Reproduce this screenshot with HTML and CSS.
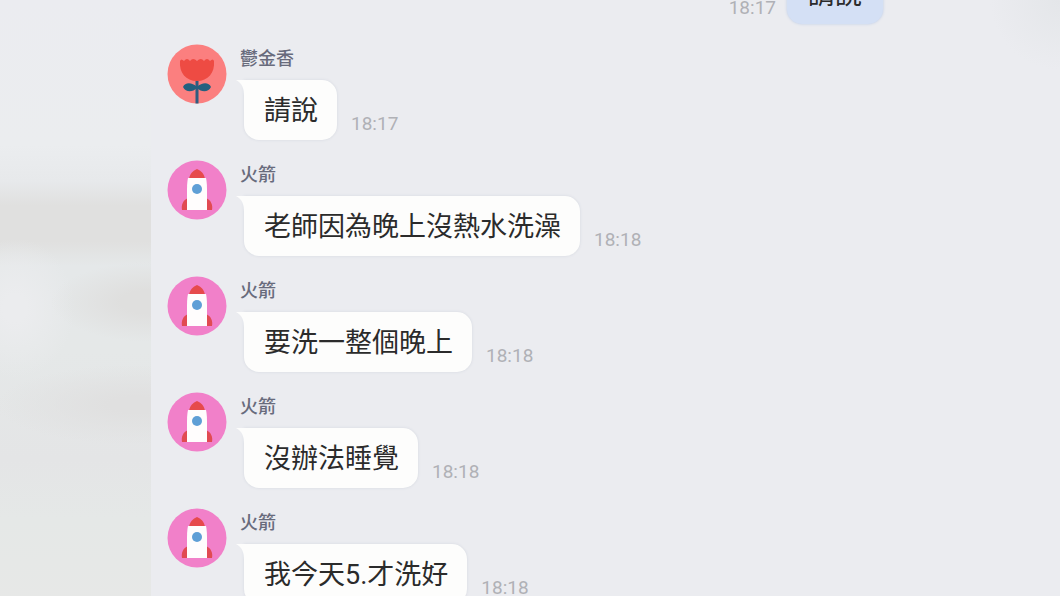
FILE: index.html
```
<!DOCTYPE html>
<html lang="zh-Hant">
  <head>
    <meta charset="UTF-8" />
    <meta name="viewport" content="width=device-width, initial-scale=1.0" />
    <title>聊天室</title>
    <link rel="stylesheet" href="styles.css">
  </head>
  <body>
    <!-- shared avatar drawings -->
    <svg class="defs" aria-hidden="true">
      <symbol id="tulip" viewBox="0 0 60 60">
        <circle cx="30" cy="30" r="29.500" fill="#fb7f7f" />
        <path d="M13 17 Q14 14 17 17 Q20 13 23 17 Q26 13 30 17 Q34 13 37 17 Q40 13 43 17 Q46 14 47 17 C48 29 41 37 30 37 C19 37 12 29 13 17Z" fill="#ee4b43" />
        <path d="M28.500 37 h3 v22.500 h-3z" fill="#2f5d80" />
        <path d="M30 43 C25 38 18 38 16 43 C19 49 26 48 30 44 C34 48 41 49 44 43 C42 38 35 38 30 43Z" fill="#23607f" />
      </symbol>
      <symbol id="rocket" viewBox="0 0 60 60">
        <circle cx="30" cy="30" r="29.500" fill="#f180c9" />
        <path d="M21 38 C16 40 14 45 15 50 H21Z M39 38 C44 40 46 45 45 50 H39Z" fill="#e14a52" />
        <path d="M22 19 C23 13 26 11 30 9 C34 11 37 13 38 19Z" fill="#e64a4c" />
        <path d="M21 18 H39 C40 23 40 27 40 34 V50 H20 V34 C20 27 20 23 21 18Z" fill="#fffdfd" />
        <circle cx="30" cy="29" r="5" fill="#5f9fd6" />
      </symbol>
    </svg>

    <div class="page">
      <div class="side side-left"></div>

      <main class="chat">
        <div class="message own">
          <time class="time">18:17</time>
          <p class="bubble">請說</p>
        </div>

        <div class="message">
          <svg class="avatar" role="img" aria-label="鬱金香"><use href="#tulip" /></svg>
          <div class="content">
            <h2 class="name">鬱金香</h2>
            <div class="line">
              <p class="bubble">請說</p>
              <time class="time">18:17</time>
            </div>
          </div>
        </div>

        <div class="message">
          <svg class="avatar" role="img" aria-label="火箭"><use href="#rocket" /></svg>
          <div class="content">
            <h2 class="name">火箭</h2>
            <div class="line">
              <p class="bubble">老師因為晚上沒熱水洗澡</p>
              <time class="time">18:18</time>
            </div>
          </div>
        </div>

        <div class="message">
          <svg class="avatar" role="img" aria-label="火箭"><use href="#rocket" /></svg>
          <div class="content">
            <h2 class="name">火箭</h2>
            <div class="line">
              <p class="bubble">要洗一整個晚上</p>
              <time class="time">18:18</time>
            </div>
          </div>
        </div>

        <div class="message">
          <svg class="avatar" role="img" aria-label="火箭"><use href="#rocket" /></svg>
          <div class="content">
            <h2 class="name">火箭</h2>
            <div class="line">
              <p class="bubble">沒辦法睡覺</p>
              <time class="time">18:18</time>
            </div>
          </div>
        </div>

        <div class="message">
          <svg class="avatar" role="img" aria-label="火箭"><use href="#rocket" /></svg>
          <div class="content">
            <h2 class="name">火箭</h2>
            <div class="line">
              <p class="bubble">我今天5.才洗好</p>
              <time class="time">18:18</time>
            </div>
          </div>
        </div>
      </main>

      <div class="side side-right"></div>
    </div>
  </body>
</html>
```

FILE: styles.css
```
* {
  box-sizing: border-box;
}

body {
  margin: 0;
  font-family: Roboto, "Noto Sans CJK TC", sans-serif;
  background-color: #ebecf0;
  color: #2b2b2b;
}

h2,
p {
  margin: 0;
}

.defs {
  display: none;
}

.page {
  display: grid;
  grid-template-columns: 151px 1fr 151px;
  height: 100vh;
  overflow: hidden;
}

/* soft backdrop on both sides of the chat */
.side-left {
  background:
    radial-gradient(ellipse 100px 40px at 100% 50%, #dfdfde 30%, transparent),
    radial-gradient(ellipse 140px 40px at 90% 67%, #e0e0e0 20%, transparent),
    radial-gradient(ellipse 60px 70px at 10% 51%, #ebecee 20%, transparent),
    linear-gradient(
      #ebecf0 0%,
      #ebedef 24%,
      #e7e9eb 30%,
      #e0e0df 34%,
      #e0e0df 40%,
      #e5e8e9 44%,
      #e5e8e8 58%,
      #e4e5e6 76%,
      #e5e8e7 86%,
      #e7e8e7 100%
    );
}

.side-right {
  background: radial-gradient(circle at 100% 0, #e4e6e9, #ebecf0 70px);
}

.chat {
  display: flex;
  flex-direction: column;
  gap: 20px;
  padding: 0 26px 0 16px;
}

.message {
  display: flex;
  gap: 13px;
}

/* the history is scrolled, so the oldest bubble is cut by the top edge */
.own {
  justify-content: flex-end;
  align-items: flex-end;
  gap: 11px;
  margin-top: -36px;
}

.avatar {
  flex: none;
  width: 60px;
  height: 60px;
}

.content {
  display: flex;
  flex-direction: column;
  gap: 8px;
}

.name {
  padding-top: 2px;
  font-size: 18px;
  line-height: 26px;
  font-weight: 500;
  color: #686b7c;
}

.line {
  display: flex;
  align-items: flex-end;
  gap: 14px;
  padding-left: 4px;
}

.bubble {
  position: relative;
  padding: 11px 19px 9px 20px;
  border-radius: 0 15px 15px 15px;
  background-color: #fdfdfc;
  box-shadow: 0 0 3px #d3d7df;
  font-size: 27px;
  line-height: 40px;
}

.line .bubble::before {
  content: "";
  position: absolute;
  top: 0;
  left: -8px;
  width: 16px;
  height: 16px;
  background-color: #fdfdfc;
  clip-path: path("M0 0 H16 V16 H8 C8 8 6 3 0 0Z");
}

.own .bubble {
  padding: 11px 21px 9px;
  border-radius: 15px;
  background-color: #d4e0f5;
  box-shadow: 0 0 3px #bccbe5;
}

.time {
  padding-bottom: 4px;
  font-size: 19px;
  line-height: 24px;
  color: #b0b1b6;
}
```
